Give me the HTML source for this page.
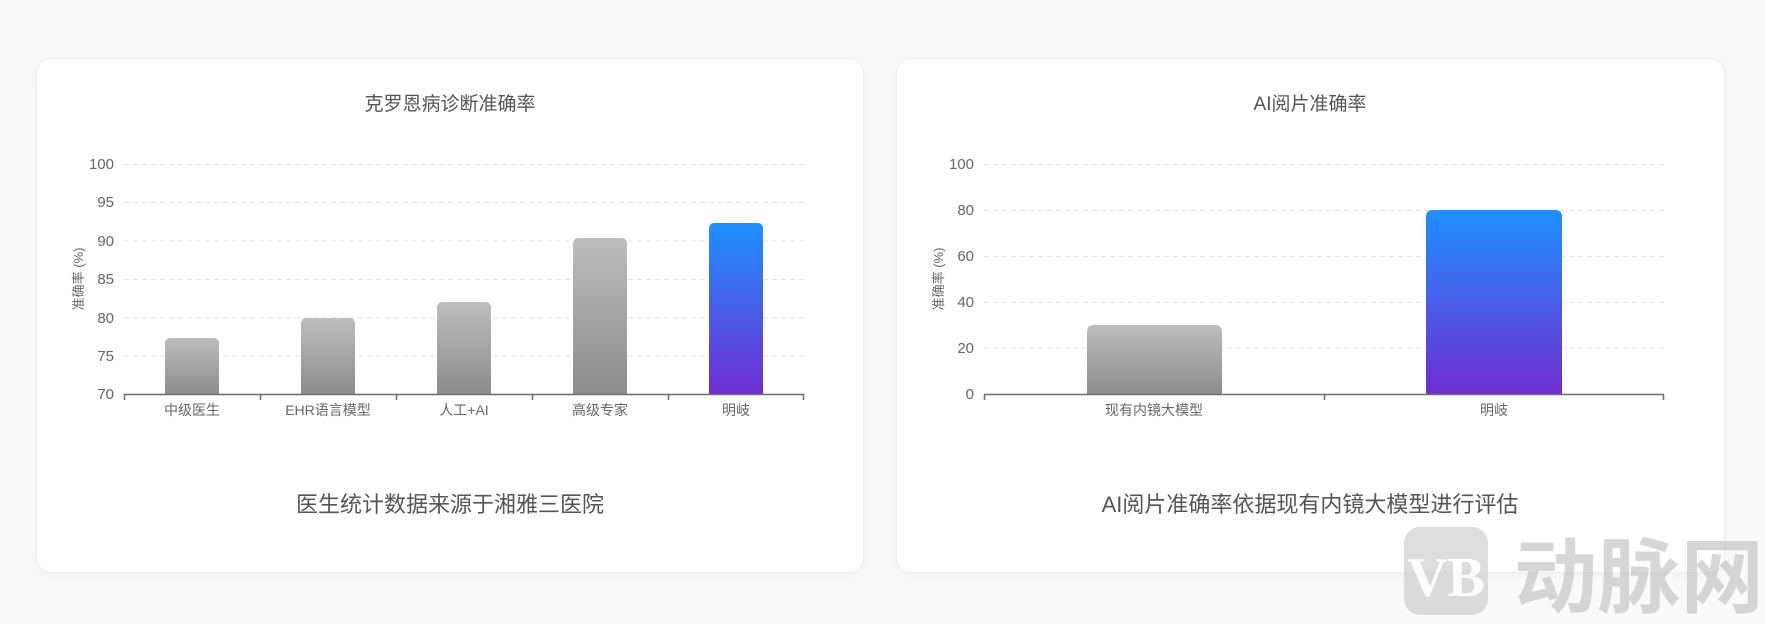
<!DOCTYPE html>
<html><head><meta charset="utf-8"><style>
html,body{margin:0;padding:0;background:#fafafa;}
body{width:1765px;height:624px;overflow:hidden;position:relative;font-family:"Liberation Sans","Noto Sans CJK SC",sans-serif;}
.card{position:absolute;top:58px;height:515px;background:#fff;border:1px solid #eeeeee;border-radius:15px;box-shadow:0 2px 10px rgba(0,0,0,0.04);box-sizing:border-box;}
svg{position:absolute;left:0;top:0;}
</style></head><body>
<div class="card" style="left:36px;width:828px"></div>
<div class="card" style="left:896px;width:829px"></div>
<svg width="1765" height="624" font-family="Liberation Sans, Noto Sans CJK SC, sans-serif">
<defs>
<linearGradient id="g" x1="0" y1="0" x2="0" y2="1"><stop offset="0" stop-color="#bdbdbd"/><stop offset="1" stop-color="#8c8c8c"/></linearGradient>
<linearGradient id="b" x1="0" y1="0" x2="0" y2="1"><stop offset="0" stop-color="#1e90ff"/><stop offset="1" stop-color="#6f2dd0"/></linearGradient>
</defs>
<text x="450" y="110" font-size="19" fill="#555" text-anchor="middle">克罗恩病诊断准确率</text>
<g stroke="#e3e3e3" stroke-dasharray="5,4" stroke-width="1">
<line x1="124" y1="164.5" x2="804" y2="164.5"/><line x1="124" y1="202.5" x2="804" y2="202.5"/><line x1="124" y1="241" x2="804" y2="241"/><line x1="124" y1="279.5" x2="804" y2="279.5"/><line x1="124" y1="318" x2="804" y2="318"/><line x1="124" y1="356" x2="804" y2="356"/>
</g>
<g font-size="15" fill="#666" text-anchor="end">
<text x="114" y="169">100</text><text x="114" y="207">95</text><text x="114" y="246">90</text><text x="114" y="284">85</text><text x="114" y="323">80</text><text x="114" y="361">75</text><text x="114" y="399">70</text>
</g>
<text transform="translate(83,279) rotate(-90)" font-size="13" fill="#666" text-anchor="middle">准确率 (%)</text>
<path d="M165,394V343a5,5 0 0 1 5,-5h44a5,5 0 0 1 5,5V394Z" fill="url(#g)"/>
<path d="M301,394V323a5,5 0 0 1 5,-5h44a5,5 0 0 1 5,5V394Z" fill="url(#g)"/>
<path d="M437,394V307a5,5 0 0 1 5,-5h44a5,5 0 0 1 5,5V394Z" fill="url(#g)"/>
<path d="M573,394V243a5,5 0 0 1 5,-5h44a5,5 0 0 1 5,5V394Z" fill="url(#g)"/>
<path d="M709,394V228a5,5 0 0 1 5,-5h44a5,5 0 0 1 5,5V394Z" fill="url(#b)"/>
<g stroke="#6e6e6e" stroke-width="1.5"><line x1="124" y1="394.5" x2="804" y2="394.5"/>
<line x1="124.5" y1="394" x2="124.5" y2="400"/><line x1="260.5" y1="394" x2="260.5" y2="400"/><line x1="396.5" y1="394" x2="396.5" y2="400"/><line x1="532.5" y1="394" x2="532.5" y2="400"/><line x1="668.5" y1="394" x2="668.5" y2="400"/><line x1="803.5" y1="394" x2="803.5" y2="400"/></g>
<g font-size="14" fill="#666" text-anchor="middle">
<text x="192" y="415">中级医生</text><text x="328" y="415">EHR语言模型</text><text x="464" y="415">人工+AI</text><text x="600" y="415">高级专家</text><text x="736" y="415">明岐</text>
</g>
<text x="450" y="512" font-size="22" fill="#555" text-anchor="middle">医生统计数据来源于湘雅三医院</text>
<text x="1310" y="110" font-size="19" fill="#555" text-anchor="middle">AI阅片准确率</text>
<g stroke="#e3e3e3" stroke-dasharray="5,4" stroke-width="1">
<line x1="984" y1="164.5" x2="1664" y2="164.5"/><line x1="984" y1="210.5" x2="1664" y2="210.5"/><line x1="984" y1="256.5" x2="1664" y2="256.5"/><line x1="984" y1="302.5" x2="1664" y2="302.5"/><line x1="984" y1="348" x2="1664" y2="348"/>
</g>
<g font-size="15" fill="#666" text-anchor="end">
<text x="974" y="169">100</text><text x="974" y="215">80</text><text x="974" y="261">60</text><text x="974" y="307">40</text><text x="974" y="353">20</text><text x="974" y="399">0</text>
</g>
<text transform="translate(943,279) rotate(-90)" font-size="13" fill="#666" text-anchor="middle">准确率 (%)</text>
<path d="M1087,394V331a6,6 0 0 1 6,-6h123a6,6 0 0 1 6,6V394Z" fill="url(#g)"/>
<path d="M1426,394V216a6,6 0 0 1 6,-6h124a6,6 0 0 1 6,6V394Z" fill="url(#b)"/>
<g stroke="#6e6e6e" stroke-width="1.5"><line x1="984" y1="394.5" x2="1664" y2="394.5"/>
<line x1="984.5" y1="394" x2="984.5" y2="400"/><line x1="1324.5" y1="394" x2="1324.5" y2="400"/><line x1="1663.5" y1="394" x2="1663.5" y2="400"/></g>
<g font-size="14" fill="#666" text-anchor="middle"><text x="1154" y="415">现有内镜大模型</text><text x="1494" y="415">明岐</text></g>
<text x="1310" y="512" font-size="22" fill="#555" text-anchor="middle">AI阅片准确率依据现有内镜大模型进行评估</text>
<g opacity="0.6">
<rect x="1404" y="527" width="84" height="88" rx="16" fill="#c8c8c8"/>
<text x="1446" y="596" font-size="56" font-weight="bold" fill="#fff" text-anchor="middle" font-family="Liberation Serif, serif">VB</text>
<text x="1514" y="606" font-size="82" fill="#bdbdbd" font-weight="bold" textLength="250" lengthAdjust="spacingAndGlyphs">动脉网</text>
</g>
</svg>
</body></html>
